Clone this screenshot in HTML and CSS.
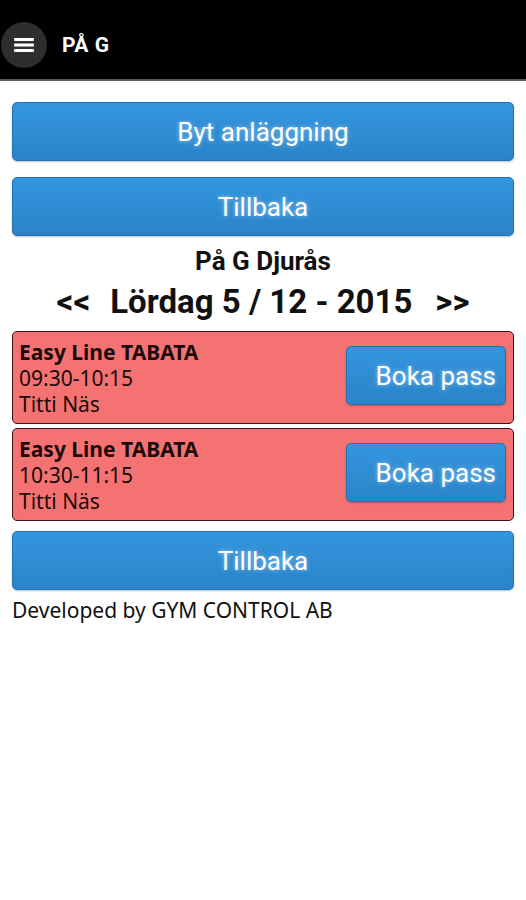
FILE: index.html
```html
<!DOCTYPE html>
<html>
  <head>
    <title>På G</title>
    <meta charset="utf-8">
    <link rel="stylesheet" href="styles.css">
  </head>
  <body>
    <div class="header">
      <span class="menu">
        <svg width="22" height="16" viewBox="0 0 22 16">
          <rect x="1" y="1" width="20" height="3" rx="1" fill="#fff"/>
          <rect x="1" y="6.5" width="20" height="3" rx="1" fill="#fff"/>
          <rect x="1" y="12" width="20" height="3" rx="1" fill="#fff"/>
        </svg>
      </span>
      <span class="title">PÅ G</span>
    </div>

    <div class="content">
      <a class="btn">Byt anläggning</a>
      <a class="btn">Tillbaka</a>

      <div class="place">På G Djurås</div>
      <div class="date"><span class="prev">&lt;&lt;</span>Lördag 5 / 12 - 2015<span class="next">&gt;&gt;</span></div>

      <div class="pass">
        <div class="info">
          <b>Easy Line TABATA</b>
          <span>09:30-10:15</span>
          <span>Titti Näs</span>
        </div>
        <a class="btn book">Boka pass</a>
      </div>
      <div class="pass">
        <div class="info">
          <b>Easy Line TABATA</b>
          <span>10:30-11:15</span>
          <span>Titti Näs</span>
        </div>
        <a class="btn book">Boka pass</a>
      </div>

      <a class="btn">Tillbaka</a>
      <div class="footer">Developed by GYM CONTROL AB</div>
    </div>
  </body>
</html>
```

FILE: styles.css
```css
body {
  margin: 0;
  background: #fff;
  font-family: Roboto, "Liberation Sans", sans-serif;
}

.header {
  height: 81px;
  background: #000;
  border-bottom: 2px solid #5a5a5a;
  display: flex;
  align-items: center;
  padding-top: 10px;
  box-sizing: border-box;
}
.menu {
  width: 46px;
  height: 46px;
  margin-left: 1px;
  border-radius: 50%;
  background: #2e2e2e;
  display: flex;
  align-items: center;
  justify-content: center;
}
.title {
  margin-left: 15px;
  color: #fff;
  font-weight: bold;
  font-size: 21px;
  letter-spacing: 0.5px;
}

.content {
  padding: 21px 12px 0;
}

.btn {
  display: flex;
  align-items: center;
  justify-content: center;
  height: 59px;
  margin-bottom: 16px;
  box-sizing: border-box;
  border: 1px solid #2571ad;
  border-radius: 5px;
  background: linear-gradient(#3496de, #2a84c9);
  color: #fff;
  font-size: 26px;
  text-shadow: 0 0 4px rgba(255, 255, 255, 0.5);
  box-shadow: 0 1px 2px rgba(0, 0, 0, 0.25);
}

.place {
  text-align: center;
  font-weight: bold;
  font-size: 26px;
  color: #111;
  margin-top: -6px;
  line-height: 30px;
}
.date {
  text-align: center;
  font-weight: bold;
  font-size: 33px;
  color: #111;
  line-height: 40px;
  margin-top: 6px;
  margin-bottom: 9px;
}
.prev {
  margin-right: 20px;
}
.next {
  margin-left: 23px;
}

.pass {
  display: flex;
  align-items: center;
  justify-content: space-between;
  height: 93px;
  box-sizing: border-box;
  margin-bottom: 4px;
  padding: 0 7px 4px 6px;
  background: #f47272;
  border: 1.5px solid #3a1717;
  border-radius: 5px;
}
.info {
  display: flex;
  flex-direction: column;
  margin-top: 4px;
  font-family: "Noto Sans", "Open Sans", sans-serif;
  font-size: 21px;
  line-height: 26px;
  color: #1a0a0a;
}
.info b {
  font-weight: bold;
}
.btn.book {
  width: 160px;
  margin: 0;
  height: 59px;
  justify-content: flex-end;
  padding-right: 9px;
}
.pass + .btn {
  margin-top: 10px;
  margin-bottom: 6px;
}

.footer {
  font-family: "Noto Sans", "Open Sans", sans-serif;
  font-size: 21px;
  color: #111;
}
```
